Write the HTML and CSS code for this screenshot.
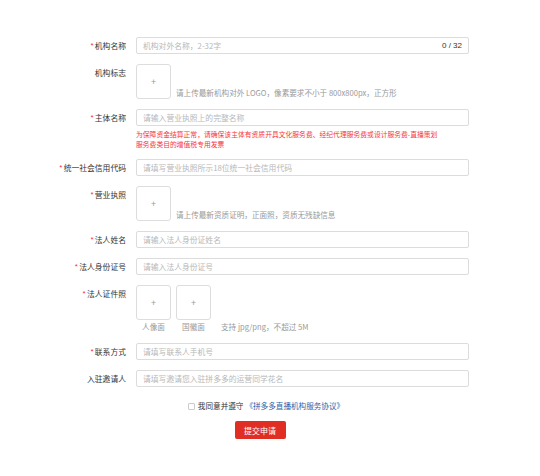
FILE: index.html
```html
<!DOCTYPE html>
<html lang="zh-CN">
  <head>
    <meta charset="UTF-8" />
    <meta name="viewport" content="width=device-width, initial-scale=1.0" />
    <title>机构入驻申请</title>
    <link rel="stylesheet" href="styles.css">
  </head>
  <body>
    <div class="apply-form">
      <div class="form-row">
        <label class="form-label required">机构名称</label>
        <div class="form-field">
          <div class="input-box">
            <input type="text" placeholder="机构对外名称，2-32字" />
            <span class="counter">0 / 32</span>
          </div>
        </div>
      </div>

      <div class="form-row">
        <label class="form-label">机构标志</label>
        <div class="form-field upload-line">
          <div class="upload-box">+</div>
          <span class="hint">请上传最新机构对外 LOGO，像素要求不小于 800x800px，正方形</span>
        </div>
      </div>

      <div class="form-row">
        <label class="form-label required">主体名称</label>
        <div class="form-field">
          <div class="input-box"><input type="text" placeholder="请输入营业执照上的完整名称" /></div>
          <div class="warn">为保障资金结算正常，请确保该主体有资质开具文化服务费、经纪代理服务费或设计服务费-直播策划服务费类目的增值税专用发票</div>
        </div>
      </div>

      <div class="form-row">
        <label class="form-label required">统一社会信用代码</label>
        <div class="form-field">
          <div class="input-box"><input type="text" placeholder="请填写营业执照所示18位统一社会信用代码" /></div>
        </div>
      </div>

      <div class="form-row">
        <label class="form-label required">营业执照</label>
        <div class="form-field upload-line">
          <div class="upload-box">+</div>
          <span class="hint">请上传最新资质证明，正面照，资质无残缺信息</span>
        </div>
      </div>

      <div class="form-row">
        <label class="form-label required">法人姓名</label>
        <div class="form-field">
          <div class="input-box"><input type="text" placeholder="请输入法人身份证姓名" /></div>
        </div>
      </div>

      <div class="form-row">
        <label class="form-label required">法人身份证号</label>
        <div class="form-field">
          <div class="input-box"><input type="text" placeholder="请输入法人身份证号" /></div>
        </div>
      </div>

      <div class="form-row">
        <label class="form-label required">法人证件照</label>
        <div class="form-field id-photos">
          <div class="photo-item">
            <div class="upload-box">+</div>
            <span class="caption">人像面</span>
          </div>
          <div class="photo-item">
            <div class="upload-box">+</div>
            <span class="caption">国徽面</span>
          </div>
          <span class="caption photo-tip">支持 jpg/png，不超过 5M</span>
        </div>
      </div>

      <div class="form-row">
        <label class="form-label required">联系方式</label>
        <div class="form-field">
          <div class="input-box"><input type="text" placeholder="请填写联系人手机号" /></div>
        </div>
      </div>

      <div class="form-row">
        <label class="form-label">入驻邀请人</label>
        <div class="form-field">
          <div class="input-box"><input type="text" placeholder="请填写邀请您入驻拼多多的运营同学花名" /></div>
        </div>
      </div>

      <div class="agree">
        <span class="checkbox"></span>
        <span>我同意并遵守</span>
        <a href="#" class="agree-link">《拼多多直播机构服务协议》</a>
      </div>

      <div class="submit-wrap">
        <button class="submit-btn">提交申请</button>
      </div>
    </div>
  </body>
</html>
```

FILE: styles.css
```css
body {
  margin: 0;
  background-color: #fff;
  font-family: "Noto Sans CJK SC", "Noto Sans", sans-serif;
  font-size: 7.6px;
  color: #333;
}
.apply-form {
  width: 540px;
  padding-top: 37px;
}
.form-row {
  display: grid;
  grid-template-columns: 126px 333px;
  column-gap: 10px;
  margin-bottom: 10px;
}
.form-label {
  font-size: 7.8px;
  line-height: 17px;
  text-align: right;
  color: #333;
}
.form-label.required::before {
  content: "*";
  color: #f33;
  margin-right: 1px;
}

/* поле ввода */
.input-box {
  display: flex;
  align-items: center;
  height: 17px;
  border: 1px solid #dcdcdc;
  border-radius: 2px;
  box-sizing: border-box;
  padding: 0 6px;
}
.input-box input {
  flex: 1;
  min-width: 0;
  border: none;
  outline: none;
  padding: 0;
  font-family: inherit;
  font-size: 7.8px;
  color: #333;
  background: transparent;
}
.input-box input::placeholder {
  color: #b8b8b8;
}
.counter {
  color: #333;
  font-family: "Liberation Sans", sans-serif;
  font-size: 8px;
  white-space: pre;
}
.warn {
  max-width: 305px;
  margin-top: 3px;
  font-size: 6.8px;
  line-height: 10px;
  color: #f5363b;
}

/* загрузка */
.upload-line {
  display: flex;
  align-items: flex-end;
}
.upload-box {
  width: 35px;
  height: 35px;
  box-sizing: border-box;
  border: 1px solid #ddd;
  border-radius: 3px;
  display: flex;
  align-items: center;
  justify-content: center;
  color: #999;
  font-size: 9px;
}
.hint {
  margin-left: 5px;
  line-height: 12px;
  color: #999;
}
.id-photos {
  display: flex;
  align-items: flex-end;
  gap: 5px;
}
.photo-item {
  display: flex;
  flex-direction: column;
  align-items: center;
}
.caption {
  line-height: 12px;
  color: #999;
  margin-top: 1px;
}
.photo-tip {
  margin-left: 5px;
}

/* соглашение и кнопка */
.agree {
  display: flex;
  align-items: center;
  justify-content: center;
  width: 532px;
  margin-top: 13px;
  line-height: 12px;
  color: #333;
}
.checkbox {
  width: 7px;
  height: 7px;
  box-sizing: border-box;
  border: 1px solid #ccc;
  border-radius: 1px;
  margin-right: 3px;
}
.agree-link {
  color: #2d5fa8;
  text-decoration: none;
  margin-left: 2px;
}
.submit-wrap {
  width: 520px;
  text-align: center;
  margin-top: 9px;
}
.submit-btn {
  width: 51px;
  height: 18px;
  border: none;
  border-radius: 2px;
  background-color: #e02e24;
  color: #fff;
  font-family: inherit;
  font-size: 8px;
  padding: 0;
  cursor: pointer;
}
```
